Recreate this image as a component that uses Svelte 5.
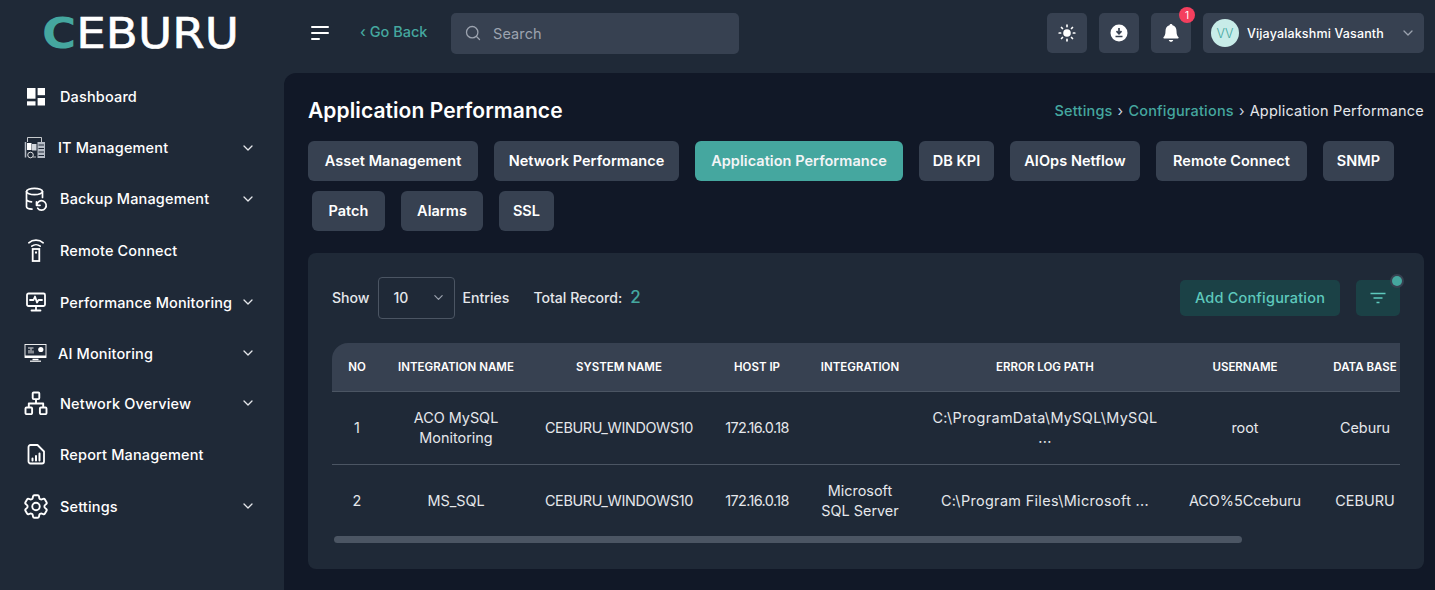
<script>
  const nav = [
    { label: 'Dashboard', icon: 'dash', h: 51, cls: '' },
    { label: 'IT Management', icon: 'it', h: 51, cls: 'tight', arrow: true },
    { label: 'Backup Management', icon: 'backup', h: 51, cls: '', arrow: true },
    { label: 'Remote Connect', icon: 'remote', h: 52, cls: '' },
    { label: 'Performance Monitoring', icon: 'perf', h: 52, cls: '', arrow: true },
    { label: 'AI Monitoring', icon: 'ai', h: 50, cls: 'tight', arrow: true },
    { label: 'Network Overview', icon: 'net', h: 50, cls: '', arrow: true },
    { label: 'Report Management', icon: 'report', h: 52, cls: '' },
    { label: 'Settings', icon: 'gear', h: 52, cls: '', arrow: true }
  ];
  const tabsA = [
    { t: 'Asset Management', w: 170 },
    { t: 'Network Performance', w: 185 },
    { t: 'Application Performance', w: 208, active: true },
    { t: 'DB KPI', w: 75 },
    { t: 'AIOps Netflow', w: 130 },
    { t: 'Remote Connect', w: 151 },
    { t: 'SNMP', w: 71 }
  ];
  const tabsB = [
    { t: 'Patch', w: 73 },
    { t: 'Alarms', w: 82 },
    { t: 'SSL', w: 55 }
  ];
  const cols = [
    { t: 'NO', w: 50 },
    { t: 'INTEGRATION NAME', w: 148 },
    { t: 'SYSTEM NAME', w: 178 },
    { t: 'HOST IP', w: 98 },
    { t: 'INTEGRATION', w: 108 },
    { t: 'ERROR LOG PATH', w: 262 },
    { t: 'USERNAME', w: 138 },
    { t: 'DATA BASE', w: 102 }
  ];
  const rows = [
    ['1', ['ACO MySQL', 'Monitoring'], 'CEBURU_WINDOWS10', '172.16.0.18', '', ['C:\\ProgramData\\MySQL\\MySQL', '...'], 'root', 'Ceburu'],
    ['2', 'MS_SQL', 'CEBURU_WINDOWS10', '172.16.0.18', ['Microsoft', 'SQL Server'], 'C:\\Program Files\\Microsoft ...', 'ACO%5Cceburu', 'CEBURU']
  ];
</script>

{#snippet icon(name)}
  {#if name === 'dash'}
    <svg width="24" height="24" viewBox="0 0 24 24" fill="#fff"><rect x="3" y="3" width="8.500" height="10.700"/><rect x="3" y="16.300" width="8.500" height="4.200"/><rect x="13.600" y="3" width="7.400" height="7.200"/><rect x="13.600" y="13" width="7.400" height="7.500"/></svg>
  {:else if name === 'it'}
    <svg width="24" height="24" viewBox="0 0 24 24" fill="none" stroke="#fff" stroke-width="1"><path d="M3.500 6V1.500h14V6" opacity=".75"/><rect x="3" y="7" width="4.500" height="7" fill="#fff" stroke="none"/><rect x="8" y="8" width="4.500" height="6.500" fill="#d1d5db" stroke="none"/><rect x="13.500" y="6" width="7.500" height="16" fill="#b6bcc6" stroke="none"/><path d="M14.500 9h5.500M14.500 12.500h5.500M14.500 16h5.500M14.500 19.500h5.500" stroke="#1f2937"/><circle cx="6.500" cy="19" r="2.800" opacity=".85"/><path d="M1.500 6v15.500" stroke="#b6bcc6" stroke-width="1.500"/><path d="M9 21h3" opacity=".7"/></svg>
  {:else if name === 'backup'}
    <svg width="24" height="24" viewBox="0 0 24 24" fill="none" stroke="#fff" stroke-width="1.700" stroke-linecap="round" stroke-linejoin="round"><ellipse cx="10.500" cy="4.500" rx="8" ry="3.200"/><path d="M2.500 4.500v15c0 1.500 2.500 2.500 5.500 2.700M18.500 4.500v6M2.500 12c0 1.500 2 2.500 5 2.800"/><path d="M12.500 14.800v3.500h3.500M12.800 18a4.700 4.700 0 1 1 .9 3.200"/></svg>
  {:else if name === 'remote'}
    <svg width="24" height="24" viewBox="0 0 24 24" fill="none" stroke="#fff" stroke-width="1.600" stroke-linecap="round"><path d="M4.800 4.800c4-3.600 10.400-3.600 14.400 0M7.800 8.200c2.400-2 6-2 8.400 0"/><rect x="8.700" y="11" width="6.600" height="12" stroke-width="1.800"/><rect x="11" y="13.500" width="2" height="2" fill="#fff" stroke="none"/></svg>
  {:else if name === 'perf'}
    <svg width="24" height="24" viewBox="0 0 24 24" fill="none" stroke="#fff" stroke-width="1.800" stroke-linecap="round" stroke-linejoin="round"><rect x="3" y="3.500" width="18" height="12.500" rx="1.500"/><path d="M6 10h3.500l1.500-3.500 2 6 1.500-2.500H18M12 16v4M7.500 20.500h9"/></svg>
  {:else if name === 'ai'}
    <svg width="24" height="24" viewBox="0 0 24 24" fill="none" stroke="#fff"><rect x="1" y="3.500" width="21" height="13" stroke-width=".9"/><rect x="1" y="14.500" width="21" height="2.500" fill="#fff" stroke="none"/><path d="M4 7h5.500M5 12.500V9M7 12.500V7.500M9 12.500V9.500" stroke-width=".9"/><circle cx="16.800" cy="8.500" r="2.600" fill="#fff" stroke="none"/><path d="M8.500 18.500h6" stroke-width="1.500"/><path d="M6 20.200h11" stroke-width="1.200"/></svg>
  {:else if name === 'net'}
    <svg width="24" height="24" viewBox="0 0 24 24" fill="none" stroke="#fff" stroke-width="1.900" stroke-linejoin="round"><rect x="8.700" y="1.500" width="6.600" height="6.600" rx="1"/><rect x="1.500" y="16.500" width="6.600" height="6.600" rx="1"/><rect x="15.900" y="16.500" width="6.600" height="6.600" rx="1"/><path d="M12 8v4.500M4.800 16.500v-4h14.400v4"/></svg>
  {:else if name === 'report'}
    <svg width="24" height="24" viewBox="0 0 24 24" fill="none" stroke="#fff" stroke-width="1.800" stroke-linejoin="round" stroke-linecap="round"><path d="M6.500 3h7l6.500 6.500v10a2 2 0 0 1-2 2H6.500a2 2 0 0 1-2-2V5a2 2 0 0 1 2-2z"/><path d="M8.500 18.500v-2M12 18.500v-4.500M15.500 18.500v-7" stroke-width="2"/></svg>
  {:else if name === 'gear'}
    <svg width="25" height="25" viewBox="2.400 2.400 19.200 19.200" fill="none" stroke="#fff" stroke-width="1.500" stroke-linejoin="round"><path d="M9.594 3.940c.09-.542.56-.94 1.110-.94h2.593c.55 0 1.020.398 1.110.94l.213 1.281c.063.374.313.686.645.870.074.040.147.083.220.127.324.196.720.257 1.075.124l1.217-.456a1.125 1.125 0 011.370.490l1.296 2.247a1.125 1.125 0 01-.260 1.431l-1.003.827c-.293.240-.438.613-.431.992a6.759 6.759 0 010 .255c-.007.378.138.750.430.990l1.005.828c.424.350.534.954.260 1.430l-1.298 2.247a1.125 1.125 0 01-1.369.491l-1.217-.456c-.355-.133-.750-.072-1.076.124a6.570 6.570 0 01-.220.128c-.331.183-.581.495-.644.869l-.213 1.280c-.090.543-.56.941-1.110.941h-2.594c-.55 0-1.020-.398-1.110-.940l-.213-1.281c-.062-.374-.312-.686-.644-.870a6.520 6.520 0 01-.220-.127c-.325-.196-.720-.257-1.076-.124l-1.217.456a1.125 1.125 0 01-1.369-.490l-1.297-2.247a1.125 1.125 0 01.260-1.431l1.004-.827c.292-.240.437-.613.430-.992a6.932 6.932 0 010-.255c.007-.378-.138-.750-.430-.990l-1.004-.828a1.125 1.125 0 01-.260-1.430l1.297-2.247a1.125 1.125 0 011.370-.491l1.216.456c.356.133.751.072 1.076-.124.072-.044.146-.087.220-.128.332-.183.582-.495.644-.869l.214-1.281z"/><circle cx="12" cy="12" r="3"/></svg>
  {/if}
{/snippet}

{#snippet chev(size = 12, color = '#e5e7eb')}
  <svg width={size} height={size} viewBox="0 0 12 12" fill="none" stroke={color} stroke-width="1.300" stroke-linecap="round" stroke-linejoin="round"><path d="M2 4l4 4 4-4"/></svg>
{/snippet}

<div class="shell">
  <aside class="side">
    <div class="logo"><span class="c">C</span><span class="rest">EBURU</span></div>
    <nav>
      {#each nav as n}
        <div class="item {n.cls}" style:height="{n.h}px">
          <span class="ico">{@render icon(n.icon)}</span>
          <span class="lbl">{n.label}</span>
          {#if n.arrow}<span class="arr">{@render chev(12)}</span>{/if}
        </div>
      {/each}
    </nav>
  </aside>

  <div class="right">
    <header class="top">
      <div class="burger"><i></i><i></i><i class="s"></i></div>
      <span class="back">‹ Go Back</span>
      <div class="search">
        <svg width="16" height="16" viewBox="0 0 16 16" fill="none" stroke="#9ca3af" stroke-width="1.300" stroke-linecap="round"><circle cx="7.200" cy="7.200" r="5.700"/><path d="M11.500 11.500l3 3"/></svg>
        <span>Search</span>
      </div>
      <div class="tools">
        <div class="sq">
          <svg width="18" height="18" viewBox="0 0 18 18" fill="#fff" stroke="#fff" stroke-width="1.700" stroke-linecap="round"><circle cx="9" cy="9" r="3.800" stroke="none"/><path d="M9 1.200v1.400M9 15.400v1.400M1.200 9h1.400M15.400 9h1.400M3.500 3.500l1 1M13.500 13.500l1 1M3.500 14.500l1-1M13.500 4.500l1-1"/></svg>
        </div>
        <div class="sq">
          <svg width="18" height="18" viewBox="0 0 18 18"><circle cx="9" cy="9" r="8.500" fill="#fff"/><path d="M9 4v5M6.500 7.200L9 9.800l2.500-2.600M5.500 12.500h7" fill="none" stroke="#374151" stroke-width="1.700"/></svg>
        </div>
        <div class="sq bell">
          <svg width="18" height="20" viewBox="0 0 18 20" fill="#fff"><path d="M9 1c.9 0 1.500.6 1.500 1.300 2.600.7 4 2.900 4 5.700 0 3.500.8 5 2 6.300.4.500.1 1.200-.6 1.200H2.100c-.7 0-1-.7-.6-1.200 1.200-1.300 2-2.800 2-6.300 0-2.800 1.400-5 4-5.700C7.500 1.600 8.100 1 9 1z"/><path d="M6.800 17h4.400c-.2 1.100-1.100 1.800-2.200 1.800S7 18.100 6.800 17z"/></svg>
          <b class="badge">1</b>
        </div>
        <div class="user">
          <span class="avatar">VV</span>
          <span class="name">Vijayalakshmi Vasanth</span>
          <span class="uchev">{@render chev(12, '#9ca3af')}</span>
        </div>
      </div>
    </header>

    <main class="main">
      <div class="title">
        <h1>Application Performance</h1>
        <div class="crumbs"><span class="link">Settings</span><span class="sep">›</span><span class="link">Configurations</span><span class="sep">›</span><span>Application Performance</span></div>
      </div>

      <div class="tabs">
        {#each tabsA as t}
          <div class="tab" class:active={t.active} style:width="{t.w}px">{t.t}</div>
        {/each}
      </div>
      <div class="tabs second">
        {#each tabsB as t}
          <div class="tab" style:width="{t.w}px">{t.t}</div>
        {/each}
      </div>

      <section class="card">
        <div class="controls">
          <span class="lab">Show</span>
          <div class="select"><span>10</span>{@render chev(11, '#9ca3af')}</div>
          <span class="lab">Entries</span>
          <span class="lab total">Total Record:</span>
          <span class="count">2</span>
          <div class="actions">
            <div class="add">Add Configuration</div>
            <div class="filter">
              <svg width="16" height="12" viewBox="0 0 16 12" fill="none" stroke="#5ec9bd" stroke-width="1.600"><path d="M0.500 1.500h15M3.500 6h9M6.500 10.500h3"/></svg>
              <i class="dot"></i>
            </div>
          </div>
        </div>

        <div class="tablewrap">
          <table>
            <colgroup>{#each cols as c}<col style:width="{c.w}px" />{/each}</colgroup>
            <thead><tr>{#each cols as c}<th>{c.t}</th>{/each}</tr></thead>
            <tbody>
              {#each rows as r}
                <tr>
                  {#each r as cell, i}
                    <td class="c{i}">
                      {#if Array.isArray(cell)}{cell[0]}<br />{cell[1]}{:else}{cell}{/if}
                    </td>
                  {/each}
                </tr>
              {/each}
            </tbody>
          </table>
        </div>
        <div class="thumb"></div>
      </section>
    </main>
  </div>
</div>

<style>
  :global(body) { margin: 0; background: #1f2937; font-family: Inter, "Noto Sans", sans-serif; color: #fff; }
  .shell { display: grid; grid-template-columns: 284px 1fr; height: 590px; overflow: hidden; }

  .side { background: #1f2937; }
  .logo { height: 71px; box-sizing: border-box; padding: 0 0 3px 42px; display: flex; align-items: center; font-size: 42.500px; line-height: 1; font-family: "DejaVu Sans", sans-serif; transform: scaleX(1.100); transform-origin: 42px 0; }
  .logo .c { color: #45a79f; font-weight: 700; }
  .logo .rest { color: #fff; font-weight: 400; -webkit-text-stroke: .6px #fff; }
  .item { display: flex; align-items: center; padding: 0 30px 0 24px; font-size: 14.500px; font-weight: 500; }
  .ico { width: 24px; height: 24px; display: flex; align-items: center; justify-content: center; margin-right: 12px; flex: none; }
  .tight .ico { margin-right: 10px; }
  .lbl { flex: 1; white-space: nowrap; letter-spacing: .15px; }
  .arr { display: flex; }

  .right { display: flex; flex-direction: column; min-width: 0; }
  .top { height: 73px; flex: none; display: flex; align-items: center; padding: 0 11px 7px 27px; box-sizing: border-box; }
  .burger { width: 18px; display: flex; flex-direction: column; gap: 4px; }
  .burger i { display: block; height: 2px; background: #fff; border-radius: 1px; }
  .burger i.s { width: 9px; }
  .back { margin-left: 31px; color: #45a79f; font-size: 14.500px; font-weight: 500; margin-bottom: 4px; width: 68px; white-space: nowrap; }
  .search { margin-left: 23px; width: 288px; height: 41px; background: #374151; border-radius: 5px; display: flex; align-items: center; gap: 12px; padding-left: 14px; box-sizing: border-box; color: #9ca3af; font-size: 14.500px; letter-spacing: .1px; }
  .tools { margin-left: auto; display: flex; align-items: center; gap: 12px; }
  .sq { width: 40px; height: 40px; background: #374151; border-radius: 5px; display: flex; align-items: center; justify-content: center; position: relative; }
  .badge { position: absolute; top: -6px; right: -4px; width: 16px; height: 16px; border-radius: 50%; background: #f43f5e; color: #fff; font-size: 10px; font-weight: 400; display: flex; align-items: center; justify-content: center; }
  .user { width: 221px; height: 40px; background: #374151; border-radius: 5px; display: flex; align-items: center; padding: 0 10px 0 8px; box-sizing: border-box; }
  .avatar { width: 28px; height: 28px; border-radius: 50%; background: #c8ece8; color: #45a79f; font-size: 12.500px; font-weight: 300; display: flex; align-items: center; justify-content: center; margin-right: 8px; }
  .name { font-size: 12.500px; font-weight: 500; white-space: nowrap; flex: 1; letter-spacing: .15px; }
  .uchev { display: flex; }

  .main { flex: 1; background: #111827; border-top-left-radius: 12px; padding: 24px 11px 0 24px; min-height: 0; }
  .title { display: flex; align-items: center; justify-content: space-between; height: 26px; margin-bottom: 18px; }
  h1 { margin: 0; font-size: 21px; font-weight: 600; letter-spacing: .08px; }
  .crumbs { display: flex; align-items: center; font-size: 14.500px; color: #e5e7eb; white-space: nowrap; letter-spacing: .2px; }
  .crumbs .link { color: #45a79f; font-weight: 500; }
  .sep { margin: 0 5px; color: #cbd5e1; }

  .tabs { display: flex; gap: 16px; }
  .second { margin: 10px 0 22px 4px; }
  .tab { height: 40px; box-sizing: border-box; padding-bottom: 2px; border-radius: 6px; background: #374151; display: flex; align-items: center; justify-content: center; font-size: 14.500px; font-weight: 600; letter-spacing: .05px; white-space: nowrap; }
  .tab.active { background: #45a79f; color: #f3f4f6; }

  .card { background: #1f2937; border-radius: 8px; padding: 24px 24px 26px; }
  .controls { display: flex; align-items: center; height: 42px; }
  .lab { font-size: 14.100px; color: #e5e7eb; font-weight: 500; padding-bottom: 2px; }
  .select { width: 77px; height: 42px; box-sizing: border-box; border: 1px solid #4b5563; border-radius: 4px; margin: 0 8px; display: flex; align-items: center; justify-content: space-between; padding: 0 10px 2px 15px; font-size: 14px; font-weight: 500; color: #e5e7eb; }
  .total { margin-left: 24px; }
  .count { margin-left: 8px; font-size: 17px; font-weight: 500; color: #45a79f; padding-bottom: 2px; }
  .actions { margin-left: auto; display: flex; gap: 16px; }
  .add { width: 160px; height: 36px; box-sizing: border-box; padding-bottom: 2px; background: #1b4146; color: #5ec9bd; border-radius: 5px; display: flex; align-items: center; justify-content: center; font-size: 14.500px; font-weight: 500; letter-spacing: .2px; }
  .filter { width: 44px; height: 36px; background: #1b4146; border-radius: 5px; display: flex; align-items: center; justify-content: center; position: relative; }
  .dot { position: absolute; top: -4px; right: -2px; width: 10px; height: 10px; border-radius: 50%; background: #45a79f; box-shadow: 0 0 0 2px #374151; }

  .tablewrap { margin-top: 24px; overflow: hidden; }
  table { width: 1084px; border-collapse: separate; border-spacing: 0; table-layout: fixed; }
  th { height: 49px; box-sizing: border-box; background: #374151; font-size: 11.500px; font-weight: 600; text-align: center; border-bottom: 1px solid #4b5563; white-space: nowrap; padding: 0; }
  th:first-child { border-top-left-radius: 16px; }
  td { height: 72px; box-sizing: border-box; text-align: center; font-size: 14.400px; line-height: 20px; color: #e5e7eb; font-weight: 400; padding: 0; white-space: nowrap; }
  td.c2 { letter-spacing: -.35px; }
  td.c3 { letter-spacing: -.6px; }
  td.c5 { letter-spacing: .35px; }
  tbody tr:first-child td { height: 73px; border-bottom: 1px solid #4b5563; }
  .thumb { width: 908px; height: 7px; margin: -1px 0 0 2px; border-radius: 4px; background: #4b5563; position: relative; }
</style>
